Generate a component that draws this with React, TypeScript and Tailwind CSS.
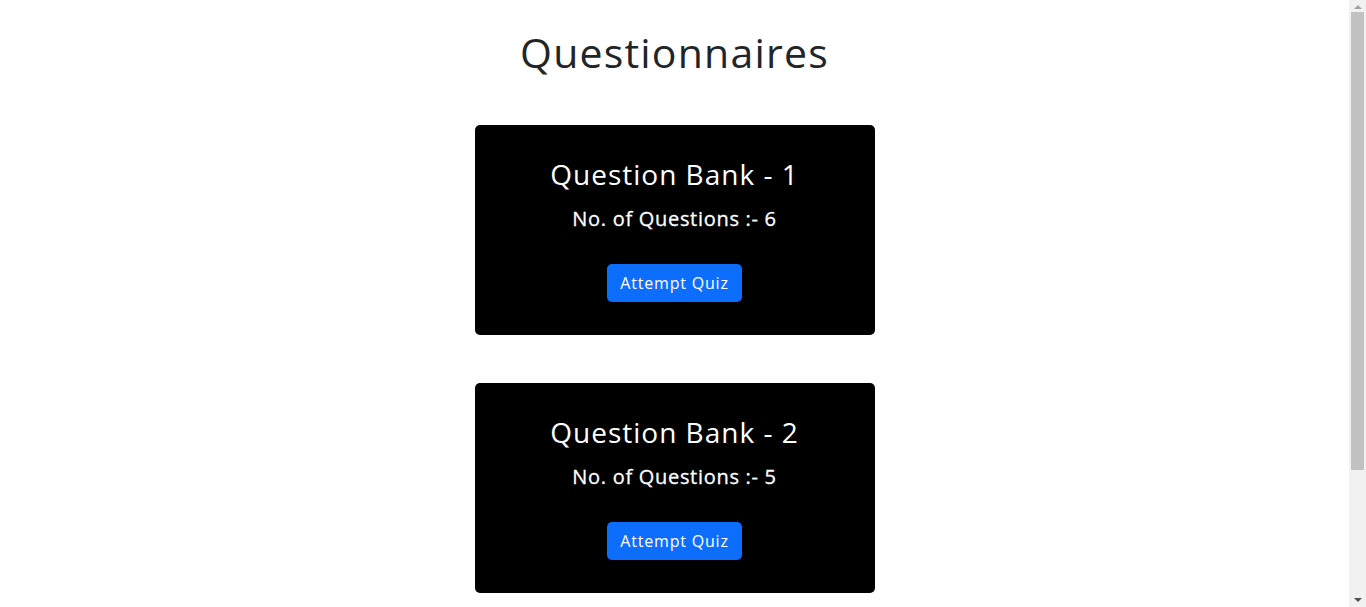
export default function App() {
  const banks = [
    { name: "Question Bank - 1", count: 6 },
    { name: "Question Bank - 2", count: 5 },
  ];
  return (
    <div
      className="min-h-[607px] bg-white pr-[17px] text-[#212529]"
      style={{ fontFamily: '"Open Sans", "Liberation Sans", sans-serif' }}
    >
      <h1 className="pt-[28px] text-center text-[41px] leading-[48px] font-normal tracking-[1.2px] text-[#212529]">
        Questionnaires
      </h1>
      <div className="mt-[49px] flex flex-col items-center gap-[48px]">
        {banks.map((b) => (
          <div
            key={b.name}
            className="flex h-[210px] w-[400px] flex-col items-center rounded-[5px] bg-black pt-[32px] text-white"
          >
            <h3 className="text-[28px] leading-[34px] font-medium tracking-[1px]">{b.name}</h3>
            <h5 className="mt-[16px] text-[20px] leading-[24px] font-medium tracking-[0.7px] [-webkit-text-stroke:0.3px_white]">
              No. of Questions :- {b.count}
            </h5>
            <button className="mt-[33px] h-[38px] w-[135px] rounded-[5px] bg-[#0d6efd] text-[16px] tracking-[0.8px] text-white">
              Attempt Quiz
            </button>
          </div>
        ))}
      </div>
      <div className="fixed top-0 right-0 flex h-full w-[17px] flex-col items-center bg-[#f1f1f1]">
        <div className="mt-[5px] h-0 w-0 border-x-[4px] border-b-[4px] border-x-transparent border-b-[#a3a3a3]" />
        <div className="mt-[3px] h-[458px] w-[13px] bg-[#c1c1c1]" />
        <div className="mt-auto mb-[5px] h-0 w-0 border-x-[4px] border-t-[4px] border-x-transparent border-t-[#505050]" />
      </div>
    </div>
  );
}
